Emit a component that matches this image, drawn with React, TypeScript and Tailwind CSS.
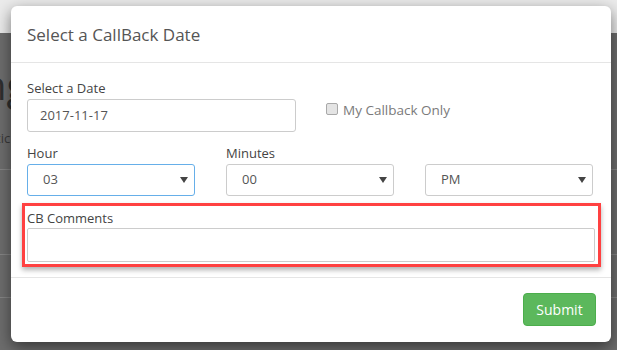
import React from "react";

const Arrow = () => (
    <svg width="8" height="6" viewBox="0 0 8 6" className="shrink-0">
        <path d="M0 0 L8 0 L4 6 Z" fill="#444" />
    </svg>
);

interface SelectBoxProps {
    label: string;
    value: string;
    focused?: boolean;
}

const SelectBox: React.FC<SelectBoxProps> = ({ label, value, focused }) => (
    <div className="flex flex-col">
        <label className="text-[13px] leading-[18px] text-[#444] h-[18px] mb-[2px]">{label}</label>
        <div
            className={`h-[32px] rounded-[3px] border flex items-center justify-between pl-[15px] pr-[6px] ${
                focused ? "border-[#66afe9]" : "border-[#ccc]"
            }`}
        >
            <span className="text-[13px] text-[#555]">{value}</span>
            <Arrow />
        </div>
    </div>
);

export default function App() {
    return (
        <div className="relative w-[617px] h-[350px] overflow-hidden font-['Open_Sans',sans-serif]">
            {/* page behind the backdrop */}
            <div className="flex flex-col h-full">
                <div className="h-[33px] bg-[#ebebeb]" />
                <div className="flex-1 bg-[#6d6d6d] flex flex-col">
                    <div className="mt-[30px] -ml-[18px] text-[40px] leading-[44px] text-[#2f2f2f]">ng</div>
                    <div className="mt-[22px] -ml-[4px] text-[13px] text-[#3a3a3a]">tic</div>
                    <div className="mt-[20px] border-t border-[#858585]" />
                    <div className="mt-[84px] border-t border-[#858585]" />
                    <div className="mt-[42px] border-t border-[#858585]" />
                </div>
            </div>

            {/* modal */}
            <div className="absolute left-[11px] top-[6px] w-[600px] h-[336px] bg-white rounded-[6px] shadow-[0_5px_15px_rgba(0,0,0,0.5)] flex flex-col">
                <div className="h-[57px] border-b border-[#e5e5e5] flex items-center pl-[16px]">
                    <h4 className="text-[17px] text-[#555] leading-none">Select a CallBack Date</h4>
                </div>

                <div className="pt-[16px] pb-[10px] flex flex-col">
                    {/* date row */}
                    <div className="flex pl-[16px]">
                        <div className="flex flex-col w-[269px]">
                            <label className="text-[13px] leading-[18px] text-[#444] h-[18px] mb-[2px]">Select a Date</label>
                            <div className="h-[33px] border border-[#ccc] rounded-[3px] flex items-center pl-[12px]">
                                <span className="text-[13px] text-[#555]">2017-11-17</span>
                            </div>
                        </div>
                        <div className="ml-[30px] mt-[24px] flex items-start gap-[5px]">
                            <span className="w-[12px] h-[12px] rounded-[2px] border border-[#a9a9a9] bg-[#e4e4e4]" />
                            <span className="text-[13.5px] leading-[12px] text-[#7a7a7a] mt-[1px]">My Callback Only</span>
                        </div>
                    </div>

                    {/* time row */}
                    <div className="mt-[12px] pl-[16px] grid grid-cols-[168px_168px_168px] gap-x-[31px]">
                        <SelectBox label="Hour" value="03" focused />
                        <SelectBox label="Minutes" value="00" />
                        <SelectBox label="" value="PM" />
                    </div>

                    {/* highlighted comments */}
                    <div className="mt-[7px] ml-[11px] w-[579px] border-[3px] border-[#ff4141] pt-[3px] pl-[2px] pr-[3px] pb-[2px] shadow-[0_3px_5px_rgba(0,0,0,0.3)]">
                        <label className="block text-[13px] leading-[18px] text-[#444] h-[18px] mb-[1px]">CB Comments</label>
                        <div className="h-[34px] border border-[#ccc] rounded-[2px]" />
                    </div>
                </div>

                <div className="border-t border-[#e5e5e5] flex-1 flex items-start justify-end pt-[15px] pr-[15px]">
                    <button className="h-[33px] w-[73px] rounded-[4px] bg-[#5cb85c] border border-[#4cae4c] text-white text-[14px]">
                        Submit
                    </button>
                </div>
            </div>
        </div>
    );
}
